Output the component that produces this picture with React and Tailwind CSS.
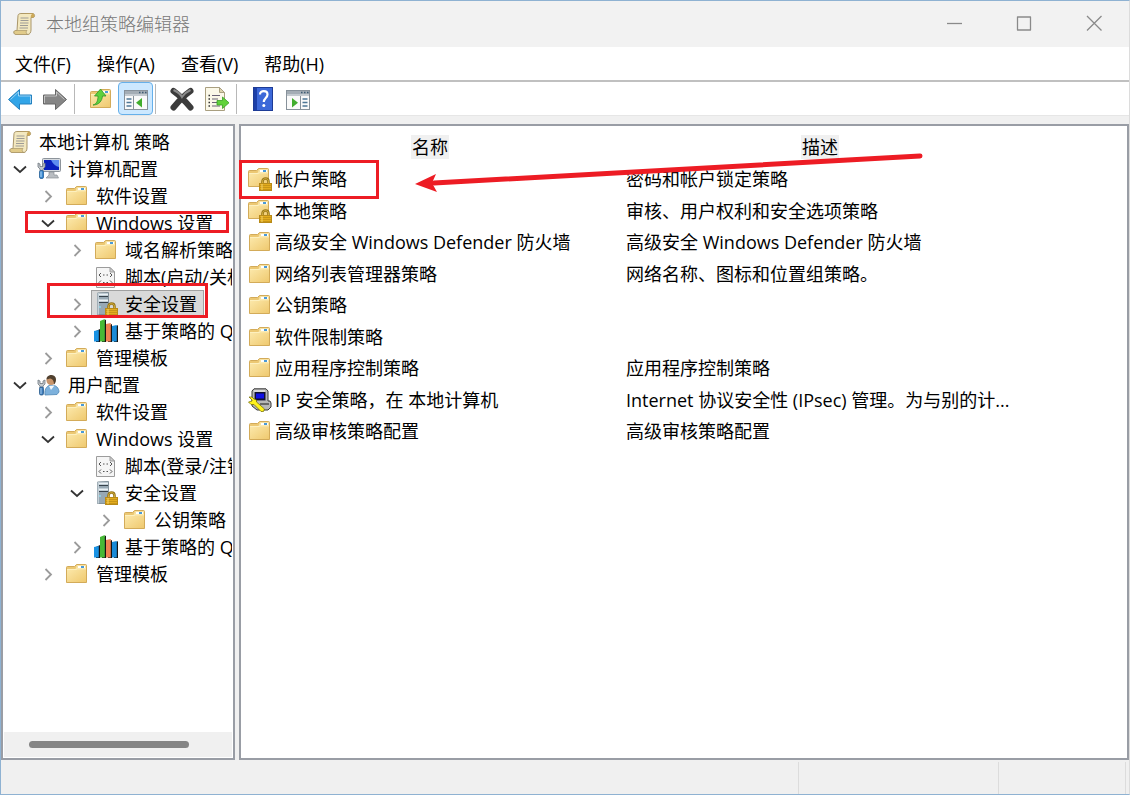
import { useState } from 'react'
import clsx from 'clsx'

const MENUS = ['文件(F)', '操作(A)', '查看(V)', '帮助(H)']

const TREE = [
  { level: 0, icon: 'scroll', label: '本地计算机 策略' },
  { level: 1, icon: 'computer', label: '计算机配置', state: 'open' },
  { level: 2, icon: 'folder', label: '软件设置', state: 'closed' },
  { level: 2, icon: 'folder', label: 'Windows 设置', state: 'open' },
  { level: 3, icon: 'folder', label: '域名解析策略', state: 'closed' },
  { level: 3, icon: 'script', label: '脚本(启动/关机)' },
  { level: 3, icon: 'server', label: '安全设置', state: 'closed', selected: true },
  { level: 3, icon: 'bars', label: '基于策略的 QoS', state: 'closed' },
  { level: 2, icon: 'folder', label: '管理模板', state: 'closed' },
  { level: 1, icon: 'user', label: '用户配置', state: 'open' },
  { level: 2, icon: 'folder', label: '软件设置', state: 'closed' },
  { level: 2, icon: 'folder', label: 'Windows 设置', state: 'open' },
  { level: 3, icon: 'script', label: '脚本(登录/注销)' },
  { level: 3, icon: 'server', label: '安全设置', state: 'open' },
  { level: 4, icon: 'folder', label: '公钥策略', state: 'closed' },
  { level: 3, icon: 'bars', label: '基于策略的 QoS', state: 'closed' },
  { level: 2, icon: 'folder', label: '管理模板', state: 'closed' },
]

const POLICIES = [
  { icon: 'lockedFolder', name: '帐户策略', desc: '密码和帐户锁定策略' },
  { icon: 'lockedFolder', name: '本地策略', desc: '审核、用户权利和安全选项策略' },
  { icon: 'folder', name: '高级安全 Windows Defender 防火墙', desc: '高级安全 Windows Defender 防火墙' },
  { icon: 'folder', name: '网络列表管理器策略', desc: '网络名称、图标和位置组策略。' },
  { icon: 'folder', name: '公钥策略', desc: '' },
  { icon: 'folder', name: '软件限制策略', desc: '' },
  { icon: 'folder', name: '应用程序控制策略', desc: '应用程序控制策略' },
  { icon: 'ipsec', name: 'IP 安全策略，在 本地计算机', desc: 'Internet 协议安全性 (IPsec) 管理。为与别的计...' },
  { icon: 'folder', name: '高级审核策略配置', desc: '高级审核策略配置' },
]

const INDENT = ['pl-px', 'pl-[5px]', 'pl-[33px]', 'pl-[62px]', 'pl-[91px]']

function Svg({ children }) {
  return (
    <svg className="w-6 h-6 shrink-0" viewBox="0 0 24 24" fill="none" aria-hidden="true">
      {children}
    </svg>
  )
}

function Folder() {
  return (
    <>
      <path d="M1.5 5.5Q1.5 4.5 2.5 4.5H9.500L11.500 2.500H20.5Q21.5 2.5 21.5 3.5V20.5H1.5Z" fill="#ecc873" stroke="#d3ab59" />
      <path d="M12 3H21V7H10.500Z" fill="#f7e2a4" />
      <path d="M13 4H20V6H13Z" fill="#fff" />
      <path d="M16 4H19V6H16Z" fill="#4a9ad8" />
      <path d="M2 7H11L12.500 6.500H21V20H2Z" fill="url(#folderFace)" />
      <path d="M2 7.500H11L12.500 6.800H21" stroke="#fdf0bf" />
    </>
  )
}

function Lock() {
  return (
    <>
      <path d="M14.5 17V14.5C14.5 10.5 20.5 10.5 20.5 14.5V17" stroke="#96761c" strokeWidth="2.600" />
      <path d="M14.5 17V14.5C14.5 10.7 20.5 10.7 20.5 14.5V17" stroke="#d8b13a" strokeWidth="1" />
      <rect x="11.5" y="16.5" width="12" height="7" fill="#e3ac1e" stroke="#b88a18" />
      <path d="M12 18.5H23M12 20.5H23M12 22.5H23" stroke="#c08f14" strokeWidth=".8" />
      <path d="M14 17V23" stroke="#f6d468" />
    </>
  )
}

const ICONS = {
  folder: <Folder />,
  lockedFolder: (
    <>
      <g transform="translate(-1 -1)">
        <Folder />
      </g>
      <Lock />
    </>
  ),
  scroll: (
    <>
      <path d="M6 3.5C6 2 8 1.5 9 1.5H21C23 2 23 5 21.5 5.5H19V18C19 20.5 17.5 22.5 16 22.5H4C1.5 22.5 1 19 3.5 18.5H5Z" fill="#f3e8bf" stroke="#a9966a" />
      <path d="M8 2H20C18.5 3 18.7 5 19 5.5H21.5C23 4.5 22.5 2 21 1.5Z" fill="#cda958" />
      <path d="M3.5 18.5H15C13.5 20 14 22 16 22.5H4C1.5 22 1.5 19 3.5 18.5Z" fill="#e1cb8a" stroke="#a9966a" strokeWidth=".7" />
      <path d="M8.5 6H16.5M8.5 8.5H16.5M8 11H16.5M8 13.5H16M7.5 16H16" stroke="#9d9b96" />
    </>
  ),
  computer: (
    <>
      <rect x="5.5" y="1.5" width="18" height="13" rx="1" fill="#d6dade" stroke="#8d949b" />
      <path d="M7 3H22V13H7Z" fill="#0a20bd" />
      <path d="M14 3H22V10Q17 9 14 3Z" fill="#5e8df0" />
      <path d="M12 15H17V18H20L21.5 21H9L12 18Z" fill="#b9bdc2" stroke="#8b9096" strokeWidth=".7" />
      <path d="M1 6V10L3 12V14H6V12L8 10V6L6 7V9.500H3V7Z" fill="#c5c9cd" stroke="#707880" strokeWidth=".8" />
      <rect x="2.5" y="13.500" width="4" height="8" rx="1.500" fill="#3a88d0" stroke="#245f97" strokeWidth=".8" />
      <path d="M4 14.500V20" stroke="#b7dcf8" />
    </>
  ),
  user: (
    <>
      <path d="M8 22C7 15 11 12 14.500 12C19 12 22 15 22 19L20 21.500Z" fill="#7db1dc" stroke="#4e86b5" strokeWidth=".8" />
      <path d="M12 13L14 17L17.500 12.500Z" fill="#f4f8fb" />
      <circle cx="14" cy="7.500" r="4.500" fill="#c9956b" />
      <path d="M9.500 6.500C9.500 1 18.500.5 19 6C19 9 18 10.500 17 11.500C17 8.500 16 6 13 5.500Z" fill="#50402f" />
      <path d="M1 7V11L3 13V15H6V13L8 11V7L6 8V10.500H3V8Z" fill="#c5c9cd" stroke="#707880" strokeWidth=".8" />
      <rect x="2.500" y="14" width="4" height="8" rx="1.500" fill="#3a78b8" stroke="#285a8c" strokeWidth=".8" />
      <path d="M4 15V21" stroke="#a9d0f0" />
    </>
  ),
  script: (
    <>
      <path d="M2.500 2.500H16L20.500 7V22.500H2.500Z" fill="#f5f5f5" stroke="#9c9c9c" />
      <path d="M16 2.500V7H20.500Z" fill="#d0d0d0" stroke="#9c9c9c" />
      <path d="M7 8L5 10L7 12M16 8L18 10L16 12M9 10H10.500M12.500 10H14" stroke="#555" />
      <path d="M7 15.500L5 17.500L7 19.500M16 15.500L18 17.500L16 19.500M9 17.500H10.500M12.500 17.500H14" stroke="#555" />
    </>
  ),
  server: (
    <>
      <path d="M3.500 1L13 .5H14.500V22.500H3.500Z" fill="#97a8b4" stroke="#71818c" strokeWidth=".8" />
      <path d="M3.500 1H5V22.500H3.500Z" fill="#c4d0d8" />
      <path d="M5 2.500H14M5 8.500H14" stroke="#eaf1f5" strokeWidth="2" />
      <path d="M5 4.500H14M5 10.500H14" stroke="#36424b" />
      <circle cx="6" cy="15" r="1" fill="#8fd8ea" />
      <Lock />
    </>
  ),
  bars: (
    <>
      <path d="M2 12L6 10V23H2ZM8 3L12 .5V23H8ZM14 7L18 5V23H14ZM20 9L24 6V23H20Z" fill="#141414" />
      <path d="M0 12L4.800 11V22.500H0Z" fill="#1992e4" />
      <path d="M6 2L10.800 0V22.500H6Z" fill="#47b936" />
      <path d="M12 5L16.800 4V22.500H12Z" fill="#ee8152" />
      <path d="M18 7L22.800 6V22.500H18Z" fill="#1a8bd8" />
    </>
  ),
  ipsec: (
    <>
      <path d="M6 .8H18L20 3V13H22L23 15V19L20 22H9L4 18V3Z" fill="#b7b7b7" stroke="#3a3a3a" />
      <path d="M6 2H17V13H6Z" fill="#d8d8d8" />
      <path d="M6.500 4H17.500V12.500H6.500Z" fill="#101030" />
      <path d="M8 5.500H16V10.500H8Z" fill="#1010e6" />
      <path d="M12 15H21V17H12Z" fill="#686868" />
      <path d="M1 9H4L6 11L8.500 12V14L16.500 21L15.500 23.500H13L6 16.500H3L.5 14L4 13V12Z" fill="#fff21c" stroke="#6e6800" strokeWidth=".7" />
    </>
  ),
}

function Icon({ name }) {
  return <Svg>{ICONS[name]}</Svg>
}

function BlockArrow({ fill, stroke, flip }) {
  return (
    <Svg>
      <g transform={flip ? 'matrix(-1 0 0 1 24 0)' : undefined}>
        <path d="M.5 12.500L11.500 2.500V8H23.500V17H11.500V22.500Z" fill={fill} stroke={stroke} strokeLinejoin="round" />
        <path d="M2.500 12.500L10.500 5V9H22.500V16" stroke="#fff" strokeOpacity=".5" />
      </g>
    </Svg>
  )
}

function PaneIcon({ flip }) {
  return (
    <Svg>
      <rect x=".5" y="3.500" width="23" height="19" fill="#fafafa" stroke="#87919a" />
      <path d="M1 4H23V9H1Z" fill="#a4adb5" />
      <path d="M1 8H23" stroke="#e3e7ea" />
      <path d="M15 5.500H16.500M18 5.500H19.500M21 5.500H22.500" stroke="#3e5c74" strokeWidth="1.500" />
      <g transform={flip ? 'matrix(-1 0 0 1 24 0)' : undefined}>
        <path d="M9.500 9V22" stroke="#87919a" />
        <path d="M2.500 12H7.500M2.500 15.500H7.500M2.500 19H7.500" stroke="#4e7796" strokeWidth="1.500" />
        <path d="M18 11V20.500L12 15.800Z" fill="#41ad2d" />
      </g>
    </Svg>
  )
}

function ToolButton({ label, active, children }) {
  return (
    <button
      aria-label={label}
      className={clsx(
        'flex w-[35px] h-[33px] items-center justify-center rounded-sm border',
        active ? 'border-[#66b0ea] bg-[#cce8ff]' : 'border-transparent hover:bg-[#e5f3ff]',
      )}
    >
      {children}
    </button>
  )
}

function Separator() {
  return <div className="ml-[2px] mr-2 h-[30px] w-px bg-[#b8b8b8]" />
}

function TitleBar() {
  return (
    <header className="flex h-[46px] shrink-0 items-center bg-[#f2f2f2] pl-[11px]">
      <Icon name="scroll" />
      <h1 className="ml-[10px] flex-1 font-light text-[#777]">本地组策略编辑器</h1>
      {[
        ['最小化', 'M5 11.500H20'],
        ['最大化', 'M5.500 5H18.500V18H5.500Z'],
        ['关闭', 'M5 4L19.500 18.500M19.500 4L5 18.500'],
      ].map(([label, d]) => (
        <button key={label} aria-label={label} className="flex h-full w-[70px] items-center justify-center">
          <Svg>
            <path d={d} stroke="#8a8a8a" strokeWidth="1.300" strokeLinejoin="round" />
          </Svg>
        </button>
      ))}
    </header>
  )
}

function Toolbar() {
  return (
    <div className="flex h-[34px] shrink-0 items-center border-b border-[#e6e6e6] bg-white pl-px">
      <ToolButton label="后退"><BlockArrow fill="#32a5e8" stroke="#2380bf" /></ToolButton>
      <ToolButton label="前进"><BlockArrow flip fill="#858585" stroke="#666" /></ToolButton>
      <Separator />
      <ToolButton label="上一级">
        <Svg>
          <Folder />
          <path d="M4 18C8 17 9 13 9 9H5.500L11.500 2L17 9H13.500C13 14 10 18 4 18Z" fill="#5fd03d" stroke="#30972a" strokeWidth=".8" />
        </Svg>
      </ToolButton>
      <ToolButton label="显示/隐藏控制台树" active><PaneIcon /></ToolButton>
      <Separator />
      <ToolButton label="删除">
        <Svg>
          <path d="M3.500 4C9 8 15 14 20.500 20.500M20.500 4C14 8.500 8 15 3.500 20.500" stroke="#3c3c3c" strokeWidth="6" strokeLinecap="round" />
          <path d="M3.500 3C8 5 11 8 12 10C14 7 17 4.500 20.500 3" stroke="#8c8c8c" strokeWidth="2" />
        </Svg>
      </ToolButton>
      <ToolButton label="导出列表">
        <Svg>
          <path d="M.5 .5H14.500L19.500 5.500V23.500H.5Z" fill="#fbf8e8" stroke="#a99f80" />
          <path d="M14.500 .5V5.500H19.500Z" fill="#ddd3ad" stroke="#a99f80" />
          <path d="M7 8.500H15M7 12H13M7 15.500H13M7 19H15" stroke="#6b6275" strokeWidth="1.200" />
          <path d="M3.500 8.500H5M3.500 12H5M3.500 15.500H5M3.500 19H5" stroke="#333" strokeWidth="1.500" />
          <path d="M12 13.500H17.500V10L24 15.800L17.500 21.500V18H12Z" fill="#62d23b" stroke="#37a024" strokeWidth=".8" />
        </Svg>
      </ToolButton>
      <Separator />
      <ToolButton label="帮助">
        <Svg>
          <rect x="2.500" y=".5" width="19" height="23" fill="#3c68d8" stroke="#1d3b96" />
          <path d="M3 1H6V23H3Z" fill="#1c3fa8" />
          <path d="M9 7.500C9 3 16.500 3 16.500 7.500C16.500 11 12.800 11 12.800 15" stroke="#fff" strokeWidth="2.200" />
          <circle cx="12.800" cy="18.500" r="1.500" fill="#fff" />
        </Svg>
      </ToolButton>
      <ToolButton label="显示/隐藏操作窗格"><PaneIcon flip /></ToolButton>
    </div>
  )
}

function Chevron({ open, label }) {
  return (
    <button aria-label={label} aria-expanded={open} className="mr-[3px] flex w-[22px] shrink-0 justify-center">
      <svg className="h-4 w-4" viewBox="0 0 16 16" fill="none">
        {open ? (
          <path d="M2 5.500L8 11L14 5.500" stroke="#333" strokeWidth="1.800" />
        ) : (
          <path d="M5.500 3L11 8.500L5.500 14" stroke="#9b9b9b" strokeWidth="1.800" />
        )}
      </svg>
    </button>
  )
}

function TreeRow({ item, selected, onSelect }) {
  return (
    <li className={clsx('flex h-[27px] items-center whitespace-nowrap', INDENT[item.level])}>
      {item.state && <Chevron open={item.state === 'open'} label={item.label} />}
      {!item.state && item.level > 0 && <span className="w-[25px] shrink-0" />}
      <button
        onClick={onSelect}
        className={clsx(
          'flex h-[27px] shrink-0 items-center gap-[7px] border pl-[2px] pr-[6px]',
          selected ? 'border-[#a0a0a0] bg-[#d9d9d9]' : 'border-transparent',
        )}
      >
        <Icon name={item.icon} />
        {item.label}
      </button>
    </li>
  )
}

function TreePane() {
  const [selected, setSelected] = useState(TREE.findIndex((item) => item.selected))

  return (
    <nav className="flex w-[234px] shrink-0 flex-col border-2 border-[#999da5] bg-white p-px">
      <ul className="flex-1 overflow-hidden pt-px">
        {TREE.map((item, i) => (
          <TreeRow key={i} item={item} selected={i === selected} onSelect={() => setSelected(i)} />
        ))}
      </ul>
      <div className="flex h-[25px] shrink-0 items-center bg-[#f0f0f0] pl-[25px]">
        <div className="h-[7px] w-40 rounded-full bg-[#858585]" />
      </div>
    </nav>
  )
}

function PolicyTable() {
  return (
    <main className="min-w-0 flex-1 border-2 border-[#999da5] bg-white pt-1">
      <table className="w-full table-fixed text-left">
        <colgroup>
          <col className="w-[378px]" />
          <col className="w-[402px]" />
          <col />
        </colgroup>
        <thead>
          <tr className="h-[33px] text-center">
            <th className="p-0 font-normal"><span className="bg-[#f0f0f0] px-px">名称</span></th>
            <th className="p-0 font-normal"><span className="bg-[#f0f0f0] px-px">描述</span></th>
            <td />
          </tr>
        </thead>
        <tbody>
          {POLICIES.map((p) => (
            <tr key={p.name} className="odd:h-8 even:h-[31px]">
              <td className="p-0 pl-[7px]">
                <span className="flex items-center gap-[3px] whitespace-nowrap">
                  <Icon name={p.icon} />
                  {p.name}
                </span>
              </td>
              <td className="p-0 pl-[7px] whitespace-nowrap">{p.desc}</td>
              <td />
            </tr>
          ))}
        </tbody>
      </table>
    </main>
  )
}

// Red boxes and the arrow that point out where to click
function Highlights() {
  return (
    <div className="pointer-events-none absolute -inset-px">
      <div className="absolute left-[25px] top-[211px] h-[22px] w-[204px] border-3 border-[#ed1c24]" />
      <div className="absolute left-[47px] top-[283px] h-[35px] w-[161px] border-3 border-[#ed1c24]" />
      <div className="absolute left-[239px] top-[160px] h-[39px] w-[140px] border-3 border-[#ed1c24]" />
      <svg className="absolute left-[410px] top-[145px] h-[55px] w-[520px]" viewBox="0 0 520 55" fill="none">
        <path d="M24 38L510 11" stroke="#ed1c24" strokeWidth="5" strokeLinecap="round" />
        <path d="M5 39L26 29L22 38L27 47Z" fill="#ed1c24" />
      </svg>
    </div>
  )
}

export default function App() {
  return (
    <div className="relative flex h-screen flex-col overflow-hidden border border-[#8fb2d2] border-r-[#dcdcdc] bg-[#f0f0f0] font-['Open_Sans','Noto_Sans_CJK_SC',sans-serif] text-[18px] leading-[24px] text-black">
      <svg className="absolute h-0 w-0" aria-hidden="true">
        <linearGradient id="folderFace" x1="0" y1="0" x2="1" y2="1">
          <stop offset="0" stopColor="#fce9ac" />
          <stop offset="1" stopColor="#efc96f" />
        </linearGradient>
      </svg>
      <TitleBar />
      <div className="flex h-[35px] shrink-0 items-center gap-[26px] border-b-2 border-[#c0c0c0] bg-white pl-[14px]">
        {MENUS.map((menu) => (
          <button key={menu}>{menu}</button>
        ))}
      </div>
      <Toolbar />
      <div className="flex min-h-0 flex-1 gap-1 pt-2">
        <TreePane />
        <PolicyTable />
      </div>
      <footer className="flex h-[34px] shrink-0 pt-[2px]">
        <div className="flex-1" />
        <div className="w-[200px] border-l border-[#dcdcdc]" />
        <div className="w-[128px] border-x border-[#dcdcdc]" />
        <div className="w-[3px]" />
      </footer>
      <Highlights />
    </div>
  )
}
